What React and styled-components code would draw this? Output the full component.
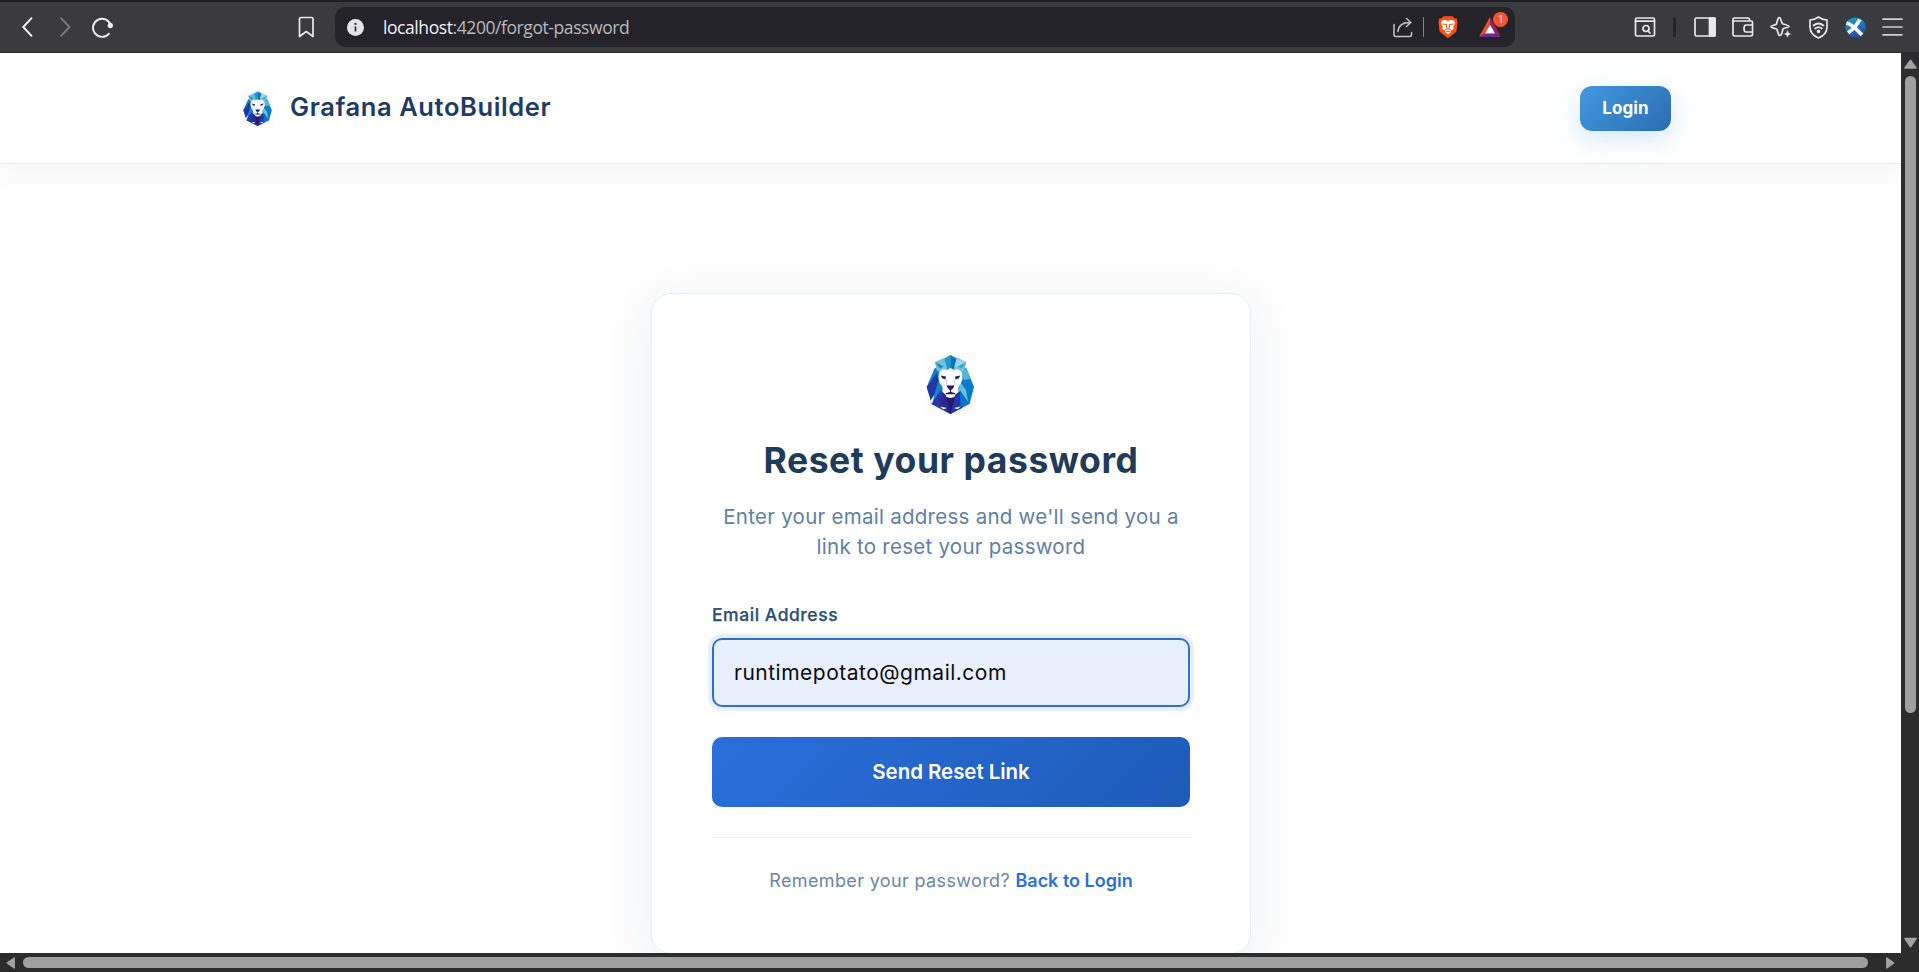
import React from 'react';
import styled, { createGlobalStyle } from 'styled-components';

const GlobalStyle = createGlobalStyle`
  *, *::before, *::after { box-sizing: border-box; }
  html, body { margin: 0; padding: 0; overflow: hidden; background: #2c2c2c; }
  body { font-family: Inter, "Liberation Sans", sans-serif; }
`;

const Window = styled.div`
  width: 100vw;
  height: 100vh;
  display: flex;
  flex-direction: column;
  overflow: hidden;
`;

/* ---------- browser chrome ---------- */

const Toolbar = styled.div`
  flex: none;
  height: 53px;
  display: flex;
  align-items: center;
  padding: 0 16px 0 18px;
  background: #3b3a3f;
  border-top: 2px solid #1f1e24;
  border-bottom: 1px solid #2b2a2f;
  color: #e9e9ec;
  svg { display: block; flex: none; }
`;

const NavButtons = styled.div`
  display: flex;
  align-items: center;
  gap: 14px;
  width: 276px;
`;

const BookmarkSlot = styled.div`
  width: 41px;
`;

const AddressBar = styled.div`
  display: flex;
  align-items: center;
  width: 1180px;
  height: 40px;
  padding: 0 14px 0 11px;
  border-radius: 10px;
  background: #242329;
`;

const Url = styled.span`
  flex: 1;
  margin-left: 18px;
  padding-bottom: 1px;
  font: 400 17.5px/24px "Open Sans", sans-serif;
  letter-spacing: -0.42px;
  color: #b9b9be;
  white-space: nowrap;
`;

const UrlHost = styled.span`
  color: #f1f1f4;
`;

const Separator = styled.span`
  width: ${(p) => (p.$thick ? 3 : 1)}px;
  height: 20px;
  margin: ${(p) => (p.$thick ? '0 18px 0 17px' : '0 14px 0 10px')};
  border-radius: 2px;
  background: ${(p) => (p.$thick ? '#26252a' : '#85858a')};
`;

const BraveSlot = styled.span`
  margin-right: 21px;
`;

const Rewards = styled.span`
  position: relative;
  width: 22px;
`;

const Badge = styled.span`
  position: absolute;
  top: -5px;
  left: 14px;
  width: 15px;
  height: 15px;
  border-radius: 50%;
  background: #fb542b;
  color: #fff;
  font: 400 10px/15px Inter, sans-serif;
  text-align: center;
`;

const Tools = styled.div`
  display: flex;
  align-items: center;
  margin-left: auto;
`;

const ToolIcons = styled.div`
  display: flex;
  align-items: center;
  gap: 16px;
`;

/* ---------- page viewport and scrollbars ---------- */

const Frame = styled.div`
  flex: 1;
  min-height: 0;
  display: grid;
  grid-template-columns: 1fr 18px;
  grid-template-rows: 900px 19px;
  background: #2c2c2c;
`;

const Viewport = styled.div`
  overflow: hidden;
  background: #fefefe;
`;

const VerticalBar = styled.div`
  display: flex;
  flex-direction: column;
  align-items: center;
  padding: 6px 0 5px 1px;
`;

const VerticalThumb = styled.div`
  width: 11px;
  height: 637px;
  margin: 7px 0 auto;
  border-radius: 6px;
  background: #9f9f9f;
`;

const HorizontalBar = styled.div`
  display: flex;
  align-items: center;
  padding: 0 6px 0 6px;
`;

const HorizontalThumb = styled.div`
  flex: 1;
  height: 11px;
  margin: 0 18px 0 8px;
  border-radius: 6px;
  background: #9f9f9f;
`;

/* ---------- site header ---------- */

const Header = styled.header`
  position: relative;
  display: flex;
  align-items: center;
  justify-content: space-between;
  height: 111px;
  padding: 0 230px 0 243px;
  background: #fff;
  border-bottom: 1px solid #e9ecf0;
  box-shadow: 0 4px 28px rgba(44, 62, 100, 0.06);
`;

const Brand = styled.div`
  display: flex;
  align-items: center;
  gap: 17px;
  svg { display: block; }
`;

const BrandName = styled.span`
  font-size: 25.5px;
  line-height: 32px;
  font-weight: 600;
  letter-spacing: 0.6px;
  color: #1e3a66;
  padding-bottom: 2px;
`;

const LoginButton = styled.button`
  width: 91px;
  height: 45px;
  padding: 0;
  border: 0;
  border-radius: 12px;
  background: linear-gradient(135deg, #4299e1, #2b6cb0);
  box-shadow: 0 8px 24px rgba(66, 153, 225, 0.24);
  color: #fff;
  font: 700 17px/24px Inter, sans-serif;
  letter-spacing: 0.1px;
`;

/* ---------- reset card ---------- */

const Main = styled.main`
  display: flex;
  justify-content: center;
  padding: 129px 0 0 1px;
`;

const Card = styled.section`
  display: flex;
  flex-direction: column;
  width: 600px;
  height: 661px;
  padding: 60px 60px 0;
  border: 1px solid #e6edfb;
  border-radius: 20px;
  background: #fff;
  box-shadow: 0 10px 48px rgba(30, 60, 120, 0.08);
`;

const CardLogo = styled.div`
  align-self: center;
  height: 60px;
  svg { display: block; }
`;

const Title = styled.h1`
  margin: 23px 0 0;
  font-size: 35.5px;
  line-height: 48px;
  font-weight: 700;
  letter-spacing: 0.55px;
  text-align: center;
  color: #1f3b5a;
`;

const Subtitle = styled.p`
  margin: 17px 0 0;
  font-size: 20.5px;
  line-height: 30px;
  letter-spacing: 0.26px;
  text-align: center;
  color: #6080a6;
`;

const Label = styled.label`
  margin-top: 41px;
  font-size: 17.5px;
  line-height: 24px;
  font-weight: 500;
  letter-spacing: 0.55px;
  color: #2c5077;
  -webkit-text-stroke: 0.25px currentColor;
`;

const EmailInput = styled.input`
  width: 478px;
  height: 69px;
  margin-top: 11px;
  padding: 0 20px;
  border: 2px solid #2a6fdb;
  border-radius: 10px;
  outline: 0;
  background: #e8effd;
  box-shadow: 0 0 0 4px #eaf0fb;
  color: #0b0b0d;
  font: 400 21px/28px Inter, sans-serif;
  letter-spacing: 0.5px;
`;

const SubmitButton = styled.button`
  width: 478px;
  height: 70px;
  margin-top: 30px;
  padding: 0;
  border: 0;
  border-radius: 10px;
  background: linear-gradient(135deg, #2a6fdb, #1e5bb8);
  color: #fff;
  font: 600 20.5px/28px Inter, sans-serif;
  letter-spacing: -0.05px;
`;

const CardFooter = styled.p`
  width: 478px;
  margin: 30px 0 0;
  padding-top: 30px;
  border-top: 1px solid #e8eff8;
  font-size: 18px;
  line-height: 26px;
  letter-spacing: 0.36px;
  text-align: center;
  color: #6b86a6;
`;

const BackLink = styled.a`
  font-weight: 600;
  letter-spacing: 0;
  color: #2a6fdb;
`;

/* ---------- drawings ---------- */

const Stroke = ({ w, h, children, width = 1.6, color = 'currentColor' }) => (
  <svg width={w} height={h} viewBox={`0 0 ${w} ${h}`} fill="none" stroke={color}
    strokeWidth={width} strokeLinecap="round" strokeLinejoin="round">{children}</svg>
);

const Lion = ({ width, height }) => (
  <svg width={width} height={height} viewBox="0 0 50 60" preserveAspectRatio="none">
    <rect width="50" height="60" rx="1" fill="#fcfcfd" />
    {/* mane */}
    <path d="M8.500 14.500 24 9 40.500 14.500 48 33 43.500 50 24.500 60 5.500 50 .7 33Z" fill="#0b7ccb" />
    <path d="M11 19 .7 33 5 46 13 33Z" fill="#2436a0" />
    <path d="M12 27 16 37 6 48 9 38Z" fill="#1285cf" />
    <path d="M40.500 14.500 45 25 38 26 35 18Z" fill="#52b4da" />
    <path d="M34 28 33 37 42 48 40 36Z" fill="#6cc0dc" />
    <path d="M14 37 5.500 50 24.500 60 36 54 34 38 24.500 36Z" fill="#2936a5" />
    <path d="M17 38 13 51 24.500 60V40Z" fill="#2b2790" />
    <path d="M20 43 24.500 60 29 43Z" fill="#231a6e" />
    <path d="M34 36 34.500 52.500 43.500 50Z" fill="#0a72c8" />
    {/* crown */}
    <path d="M24.500 1 9 8 10.500 16 14.500 19 24.500 15 34.500 19 38.500 16 40.500 8Z" fill="#6fc1df" />
    <path d="M24.500 1 18.500 5 21.500 16 24.500 15Z" fill="#1a98d0" />
    <path d="M24.500 1 30.500 5 27.500 16 24.500 15Z" fill="#0b74b6" />
    <path d="M30.500 5 40.500 8 33 12 28.500 13Z" fill="#9cd6e6" />
    <path d="M9 8 17.500 12.500 14 14.500Z" fill="#1b86c0" />
    <path d="M40.500 8 32 12.500 35.500 14.500Z" fill="#3aa3cd" />
    {/* gaps at the jaw */}
    <path d="M4.500 46.500 8.500 41 6 50ZM14 52.500 21 54 17.500 55.300ZM35 52.500 28 54 31.500 55.300Z" fill="#fcfcfd" />
    {/* face */}
    <path d="M17 15 21 16 24.500 14 28 16 32 15 36 18.500 36.500 25 34.500 30 32.500 33 32.500 38 29.500 40.500 28.500 43 24.500 44 20.500 43 19.500 40.500 16.500 38 16.500 33 13.500 29 12.500 22 13.500 18Z" fill="#fff" />
    <path d="M14.500 21.500 20 22.500 19.500 25.500 16.500 24.500ZM34.500 21.500 29 22.500 29.500 25.500 32.500 24.500Z" fill="#27266f" />
    <path d="M20.200 25 20.800 31M28.800 25 28.200 31" stroke="#b9c4e6" strokeWidth=".8" />
    <path d="M20.500 31.500H28.500L27 34.500 25.100 36V38L29.500 39.300 29 40.300H20L19.500 39.300 23.900 38V36L22 34.500Z" fill="#211b63" />
  </svg>
);

const BraveIcon = () => (
  <svg width="20" height="24" viewBox="0 0 20 24">
    <path d="M5.500 1.200H14.500L16.300 3.200 18.700 3.600 19.500 7 18.400 16.500 10 23.300 1.600 16.500.5 7 1.300 3.600 3.700 3.200Z" fill="#fb5011" />
    <path d="M3.800 5.700 7 5 10 5.700 13 5 16.200 5.700 17 8.300 15.300 11.800 15.600 14 12.500 15.700 13 17.200 10 19.300 7 17.200 7.500 15.700 4.400 14 4.700 11.800 3 8.300Z" fill="#fff" />
    <path d="M4.800 9 8.300 9.500 8.800 13M15.200 9 11.700 9.500 11.200 13M7.300 14.700 10 13.500 12.700 14.700M8.200 16.900 10 16 11.800 16.900" fill="none" stroke="#fb5011" strokeWidth="1.100" />
  </svg>
);

const TriangleIcon = () => (
  <svg width="22" height="20" viewBox="0 0 22 20">
    <path d="M11 0 0 20 6 16.500 11 7Z" fill="#ff4724" />
    <path d="M11 0 22 20 16 16.500 11 7Z" fill="#9e1f63" />
    <path d="M0 20H22L16 16.500H6Z" fill="#662d91" />
    <path d="M11 7.500 16 16.500H6Z" fill="#fff" />
  </svg>
);

const ExtensionIcon = () => (
  <svg width="21" height="21" viewBox="0 0 21 21">
    <defs>
      <linearGradient id="ext" x1="0.3" y1="0" x2="0.6" y2="1">
        <stop offset="0" stopColor="#14a0c4" />
        <stop offset="1" stopColor="#2a45b0" />
      </linearGradient>
    </defs>
    <circle cx="10.5" cy="10.500" r="10.100" fill="url(#ext)" />
    <path d="M1.500 6C7 7 11 12 17 18M14.800 2.500Q11 10 3.200 15.800" fill="none" stroke="#fff" strokeWidth="3.800" />
  </svg>
);

const BrowserToolbar = () => (
  <Toolbar>
    <NavButtons>
      <Stroke w={20} h={22} width={1.9} color="#f2f2f4"><path d="M13.500 2.200 5.300 11 13.500 19.800" /></Stroke>
      <Stroke w={26} h={22} width={1.8} color="#7d7c82"><path d="M9 2.200 17.500 11 9 19.800" /></Stroke>
      <Stroke w={24} h={22} width={1.9} color="#f2f2f4">
        <path d="M16.800 17.800A9 9 0 1 1 18.600 9" />
        <circle cx="18.300" cy="9.500" r="1.700" fill="#f2f2f4" />
      </Stroke>
    </NavButtons>
    <BookmarkSlot>
      <Stroke w={26} h={22} width={1.7}><path d="M5.500 3Q5.500 1.500 7 1.500H17.500Q19 1.500 19 3V20.500L12.250 15.500 5.500 20.500Z" /></Stroke>
    </BookmarkSlot>
    <AddressBar>
      <svg width="19" height="19" viewBox="0 0 19 19">
        <circle cx="9.500" cy="9.500" r="8.500" fill="#e3e2e8" />
        <path d="M9.500 8.500V13.500" stroke="#2a292f" strokeWidth="1.700" />
        <circle cx="9.500" cy="5.900" r="1.100" fill="#2a292f" />
      </svg>
      <Url><UrlHost>localhost</UrlHost>:4200/forgot-password</Url>
      <Stroke w={20} h={21} width={1.5} color="#c3c3c7">
        <path d="M1 7.500V18Q1 19.500 2.500 19.500H17Q18.500 19.500 18.500 18V15.500M5 14.500Q5.500 5.500 17.500 5.500M13.500 1.500 17.800 5.500 13.500 9.500" />
      </Stroke>
      <Separator />
      <BraveSlot><BraveIcon /></BraveSlot>
      <Rewards><TriangleIcon /><Badge>1</Badge></Rewards>
    </AddressBar>
    <Tools>
      <Stroke w={22} h={20} width={1.7}>
        <rect x="1.500" y="1" width="19" height="18" rx="1.500" />
        <path d="M1.500 4.200H20.500M13.800 13.800 16 16" />
        <circle cx="12" cy="11.500" r="3" />
      </Stroke>
      <Separator $thick />
      <ToolIcons>
        <Stroke w={22} h={20} width={1.7}>
          <rect x="1" y="1" width="20" height="18" rx="1.500" />
          <path d="M15.500 1H21V19H15.500Z" fill="currentColor" />
        </Stroke>
        <Stroke w={22} h={20} width={1.7}>
          <path d="M17.500 4V2.500Q17.500 1 16 1H2.500Q1 1 1 2.500V17.500Q1 19 2.500 19H19Q20.500 19 20.500 17.500V5.500Q20.500 4 19 4H1M20.500 8H14Q12 8 12 11.500 12 15 14 15H20.500" />
        </Stroke>
        <Stroke w={22} h={22} width={1.7}>
          <path d="M9.500 1.500C11 1.500 11 7.500 13 8 19 9.500 19 10 19 10.500 19 11.500 13.500 12 13 13 11.500 19 11 19.500 9.500 19.500 8 19.500 8 14 6.500 13 1 11.500 .9 11 .9 10.500 .9 9.500 6 9 6.500 8 8 2 8.500 1.500 9.500 1.500Z" />
          <path d="M17.500 13.500 18.800 16.700 22 18 18.800 19.300 17.500 22 16.200 19.300 13 18 16.200 16.700Z" fill="currentColor" stroke="#3b3a3f" strokeWidth="0.500" />
        </Stroke>
        <Stroke w={21} h={23} width={1.7}>
          <path d="M10.500 1Q14 3.500 19 4V11Q19 18.500 10.500 22 2 18.500 2 11V4Q7 3.500 10.500 1ZM5.500 9.500Q10.500 5.500 15.500 9.500M7.200 12.500Q10.500 9.700 13.800 12.500" />
          <circle cx="10.500" cy="15.300" r="1" fill="currentColor" />
        </Stroke>
        <ExtensionIcon />
        <Stroke w={21} h={20} width={1.7} color="#cfcfd3"><path d="M1 2.200H20M1 10H20M1 17.800H20" /></Stroke>
      </ToolIcons>
    </Tools>
  </Toolbar>
);

const Arrow = ({ w, h, d }) => (
  <svg width={w} height={h} viewBox={`0 0 ${w} ${h}`}>
    <path d={d} fill="#a3a3a3" stroke="#a3a3a3" strokeWidth="1.500" strokeLinejoin="round" />
  </svg>
);

export default function App() {
  return (
    <Window>
      <GlobalStyle />
      <BrowserToolbar />
      <Frame>
        <Viewport>
          <Header>
            <Brand>
              <Lion width={30} height={35} />
              <BrandName>Grafana AutoBuilder</BrandName>
            </Brand>
            <LoginButton>Login</LoginButton>
          </Header>
          <Main>
            <Card>
              <CardLogo><Lion width={50} height={60} /></CardLogo>
              <Title>Reset your password</Title>
              <Subtitle>Enter your email address and we'll send you a<br />link to reset your password</Subtitle>
              <Label htmlFor="email">Email Address</Label>
              <EmailInput id="email" type="text" defaultValue="runtimepotato@gmail.com" />
              <SubmitButton>Send Reset Link</SubmitButton>
              <CardFooter>Remember your password? <BackLink>Back to Login</BackLink></CardFooter>
            </Card>
          </Main>
        </Viewport>
        <VerticalBar>
          <Arrow w={13} h={10} d="M6.500 1.200 12 9H1Z" />
          <VerticalThumb />
          <Arrow w={13} h={11} d="M6.500 9.800 12 1.500H1Z" />
        </VerticalBar>
        <HorizontalBar>
          <Arrow w={9} h={12} d="M1.200 6 8.200 1V11Z" />
          <HorizontalThumb />
          <Arrow w={9} h={12} d="M7.800 6 .8 1V11Z" />
        </HorizontalBar>
      </Frame>
    </Window>
  );
}
